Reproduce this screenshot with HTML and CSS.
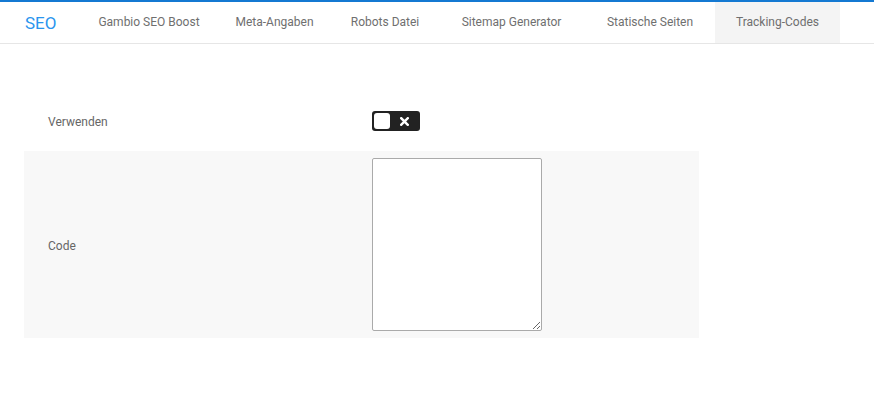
FILE: index.html
```html
<!DOCTYPE html>
<html>
<head>
<meta charset="utf-8">
<link rel="stylesheet" href="styles.css">
</head>
<body>
<nav class="topnav">
  <a class="brand">SEO</a>
  <a class="tab t1">Gambio SEO Boost</a>
  <a class="tab t2">Meta-Angaben</a>
  <a class="tab t3">Robots Datei</a>
  <a class="tab t4">Sitemap Generator</a>
  <a class="tab t5">Statische Seiten</a>
  <a class="tab t6 active">Tracking-Codes</a>
</nav>
<main class="content">
  <div class="form">
    <div class="row">
      <div class="label">Verwenden</div>
      <div class="control">
        <span class="switch"><span class="knob"></span><svg class="cross" width="9" height="9" viewBox="0 0 9 9"><path d="M1.2 1.2 L7.8 7.8 M7.8 1.2 L1.2 7.8" stroke="#fff" stroke-width="2.4" stroke-linecap="square"/></svg></span>
      </div>
    </div>
    <div class="row shaded">
      <div class="label">Code</div>
      <div class="control">
        <textarea class="code"></textarea>
      </div>
    </div>
  </div>
</main>
</body>
</html>
```

FILE: styles.css
```css
* { box-sizing: border-box; }
html, body { margin: 0; padding: 0; background: #fff; }
body { font-family: Roboto, "Liberation Sans", sans-serif; color: #666; }
.topnav {
  display: flex;
  align-items: stretch;
  height: 44px;
  border-top: 2px solid #1479d2;
  border-bottom: 1px solid #e6e6e6;
}
.topnav a { display: flex; align-items: center; justify-content: center; text-decoration: none; white-space: nowrap; }
.brand { font-size: 17px; color: #2a95ee; width: 81px; padding-left: 25px; justify-content: flex-start !important; }
.tab { font-size: 12px; color: #6f6f6f; padding-bottom: 1px; }
.t1 { width: 136px; }
.t2 { width: 115px; }
.t3 { width: 106px; }
.t4 { width: 147px; }
.t5 { width: 130px; }
.t6 { width: 125px; }
.tab.active { background: #f4f4f4; }
.content { padding: 57px 24px 0; }
.form { width: 675px; display: flex; flex-direction: column; gap: 10px; }
.row { display: flex; align-items: center; min-height: 40px; }
.row.shaded { background: #f8f8f8; padding: 7px 0; }
.label { width: 348px; padding-left: 24px; padding-top: 2px; font-size: 12px; color: #666; }
.control { display: flex; align-items: center; }
.switch {
  display: flex; align-items: center;
  width: 48px; height: 20px; border-radius: 3px;
  background: #222; padding: 2px;
}
.knob { width: 16px; height: 16px; background: #fff; border-radius: 3px; }
.cross { display: block; margin-left: 10px; }
.code {
  display: block; width: 170px; height: 173px; margin: 0;
  border: 1px solid #aaa; border-radius: 2px; background: #fff;
}
```
